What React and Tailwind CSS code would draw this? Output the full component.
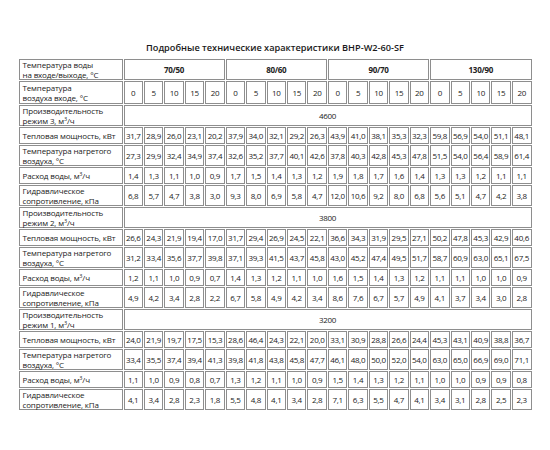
import React from "react";

const groups = ["70/50", "80/60", "90/70", "130/90"];
const temps = ["0", "5", "10", "15", "20"];

const M3 = () => (
  <>
    м<span className="relative -top-[2.5px] text-[5.5px] leading-none">3</span>/ч
  </>
);

const sections = [
  {
    mode: "3",
    flow: "4600",
    rows: [
      "31,7 28,9 26,0 23,1 20,2 37,9 34,0 32,1 29,2 26,3 43,9 41,0 38,1 35,3 32,3 59,8 56,9 54,0 51,1 48,1",
      "27,3 29,9 32,4 34,9 37,4 32,6 35,2 37,7 40,1 42,6 37,8 40,3 42,8 45,3 47,8 51,5 54,0 56,4 58,9 61,4",
      "1,4 1,3 1,1 1,0 0,9 1,7 1,5 1,4 1,3 1,2 1,9 1,8 1,7 1,6 1,4 1,3 1,3 1,2 1,1 1,1",
      "6,8 5,7 4,7 3,8 3,0 9,3 8,0 6,9 5,8 4,7 12,0 10,6 9,2 8,0 6,8 5,6 5,1 4,7 4,2 3,8",
    ],
  },
  {
    mode: "2",
    flow: "3800",
    rows: [
      "26,6 24,3 21,9 19,4 17,0 31,7 29,4 26,9 24,5 22,1 36,6 34,3 31,9 29,5 27,1 50,2 47,8 45,3 42,9 40,6",
      "31,2 33,4 35,6 37,7 39,8 37,1 39,3 41,5 43,7 45,8 43,0 45,2 47,4 49,5 51,7 58,7 60,9 63,0 65,1 67,5",
      "1,2 1,1 1,0 0,9 0,7 1,4 1,3 1,2 1,1 1,0 1,6 1,5 1,4 1,3 1,2 1,1 1,1 1,0 1,0 0,9",
      "4,9 4,2 3,4 2,8 2,2 6,7 5,8 4,9 4,2 3,4 8,6 7,6 6,7 5,7 4,9 4,1 3,7 3,4 3,0 2,8",
    ],
  },
  {
    mode: "1",
    flow: "3200",
    rows: [
      "24,0 21,9 19,7 17,5 15,3 28,6 46,4 24,3 22,1 20,0 33,1 30,9 28,8 26,6 24,4 45,3 43,1 40,9 38,8 36,7",
      "33,4 35,5 37,4 39,4 41,3 39,8 41,8 43,8 45,8 47,7 46,1 48,0 50,0 52,0 54,0 63,0 65,0 66,9 69,0 71,1",
      "1,1 1,0 0,9 0,8 0,7 1,3 1,2 1,1 1,0 0,9 1,5 1,4 1,3 1,2 1,1 1,0 1,0 0,9 0,9 0,8",
      "4,1 3,4 2,8 2,3 1,8 5,5 4,8 4,1 3,4 2,8 7,1 6,3 5,5 4,7 4,1 3,4 3,1 2,8 2,5 2,3",
    ],
  },
];

const labels = [
  { text: <>Тепловая мощность, кВт</>, h: "h-[17px]" },
  { text: <>Температура нагретого<br />воздуха, °С</>, h: "h-[20px]" },
  { text: <>Расход воды, <M3 /></>, h: "h-[17px]" },
  { text: <>Гидравлическое<br />сопротивление, кПа</>, h: "h-[20px]" },
];

const cell = "border border-[#8e8e8e] p-0";
const lab = `${cell} text-left pl-[3px] leading-[9.5px] align-middle`;
const num = `${cell} text-center align-middle tracking-[-0.3px]`;

export default function App() {
  return (
    <div
      className="w-[550px] h-[450px] bg-white text-[#222] flex flex-col items-center pt-[41px]"
      style={{ fontFamily: '"Open Sans", "Noto Sans", sans-serif' }}
    >
      <div className="text-[9.2px] font-semibold leading-[13px] mb-[4px] text-[#1a1a1a]">
        Подробные технические характеристики BHP-W2-60-SF
      </div>
      <table className="table-fixed w-[515px] border-separate border-spacing-[1px] text-[8px] tracking-[-0.15px]">
        <colgroup>
          <col className="w-[104px]" />
          {Array.from({ length: 20 }).map((_, i) => (
            <col key={i} />
          ))}
        </colgroup>
        <tbody>
          <tr>
            <td className={`${lab} h-[20px]`}>
              Температура воды
              <br />
              на входе/выходе, °С
            </td>
            {groups.map((g) => (
              <td key={g} colSpan={5} className={`${num} font-bold`}>
                {g}
              </td>
            ))}
          </tr>
          <tr>
            <td className={`${lab} h-[23px]`}>
              Температура
              <br />
              воздуха входе, °С
            </td>
            {groups.map((g) =>
              temps.map((t) => (
                <td key={g + t} className={num}>
                  {t}
                </td>
              ))
            )}
          </tr>
          {sections.map((s) => (
            <React.Fragment key={s.mode}>
              <tr>
                <td className={`${lab} h-[20px]`}>
                  Производительность
                  <br />
                  режим {s.mode}, <M3 />
                </td>
                <td colSpan={20} className={num}>
                  {s.flow}
                </td>
              </tr>
              {s.rows.map((r, i) => (
                <tr key={i}>
                  <td className={`${lab} ${labels[i].h}`}>{labels[i].text}</td>
                  {r.split(" ").map((v, j) => (
                    <td key={j} className={num}>
                      {v}
                    </td>
                  ))}
                </tr>
              ))}
            </React.Fragment>
          ))}
        </tbody>
      </table>
    </div>
  );
}
